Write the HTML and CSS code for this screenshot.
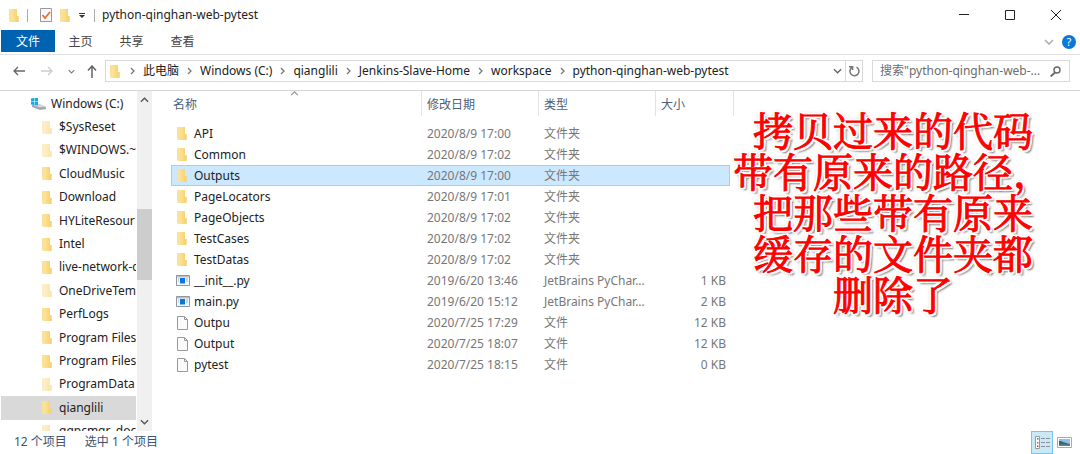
FILE: index.html
```html
<!DOCTYPE html>
<html lang="zh-CN">
<head>
<meta charset="utf-8">
<title>python-qinghan-web-pytest</title>
<link rel="stylesheet" href="styles.css">
</head>
<body>
<svg width="0" height="0" class="defs" aria-hidden="true">
  <defs>
    <linearGradient id="gold" x1="0" x2="1"><stop offset="0" stop-color="#ffe9a6"/><stop offset="1" stop-color="#f6cf6b"/></linearGradient>
    <symbol id="folder" viewBox="0 0 10 13"><path d="M0 0h8v7h1.500v6H2L0 12z" fill="url(#gold)"/><path d="M0 0l2 1v12l-2-1z" fill="#fbe09a"/><path d="M8 7h1.500v6H8z" fill="#f6d27a"/></symbol>
    <symbol id="chev" viewBox="0 0 6 8"><path d="M1 1l3 3-3 3" fill="none" stroke="#777" stroke-width="1.3"/></symbol>
    <symbol id="down" viewBox="0 0 10 6"><path d="M1 1l4 4 4-4" fill="none" stroke="currentColor" stroke-width="1.5"/></symbol>
    <symbol id="py" viewBox="0 0 14 11"><path d="M.5.5h13v10H.5z" fill="#f4f7fa" stroke="#8e979f"/><path d="M1 1h12v1.500H1z" fill="#b9c1c8"/><path d="M4 3h5v5.500H4z" fill="#0a78d7"/><path d="M10 4h2M10 6h2M2 4h1M2 6h1" stroke="#9db4c8"/></symbol>
    <symbol id="doc" viewBox="0 0 11 14"><path d="M.5.500h7l3 3v10H.5z" fill="#fafafa" stroke="#999"/><path d="M7.500.500v3h3" fill="none" stroke="#999"/></symbol>
  </defs>
</svg>
<div class="window">
  <header class="titlebar">
    <svg class="folder"><use href="#folder"/></svg>
    <span class="rule"></span>
    <button class="plain check" aria-label="属性"><svg width="12" height="14" viewBox="0 0 12 14"><path d="M.5.500h11v13H.5z" fill="#f8f8f8" stroke="#999"/><path d="M2.500 7l2.500 3 5-6" fill="none" stroke="#e8703a" stroke-width="1.800"/></svg></button>
    <button class="plain" aria-label="新建文件夹"><svg class="folder"><use href="#folder"/></svg></button>
    <button class="plain more" aria-label="自定义快速访问工具栏"><svg width="6" height="5" viewBox="0 0 6 5"><path d="M0 0h6v1H0zM0 2h6L3 5z" fill="#333"/></svg></button>
    <span class="rule"></span>
    <h1 class="title">python-qinghan-web-pytest</h1>
    <div class="controls">
      <button class="plain" aria-label="最小化"><svg width="10" height="10" viewBox="0 0 10 10"><path d="M0 4.500h10" stroke="#222"/></svg></button>
      <button class="plain" aria-label="最大化"><svg width="10" height="10" viewBox="0 0 10 10"><path d="M.5.500h9v9h-9z" fill="none" stroke="#222"/></svg></button>
      <button class="plain" aria-label="关闭"><svg width="10" height="10" viewBox="0 0 10 10"><path d="M0 0l10 10M10 0L0 10" stroke="#222"/></svg></button>
    </div>
  </header>
  <div class="ribbon">
    <button class="tab active">文件</button><button class="tab">主页</button><button class="tab">共享</button><button class="tab">查看</button>
    <div class="ribbon-end">
      <button class="plain light" aria-label="展开功能区"><svg width="10" height="6"><use href="#down"/></svg></button>
      <button class="plain help" aria-label="帮助">?</button>
    </div>
  </div>
  <div class="location">
    <div class="history">
      <button class="plain" aria-label="后退"><svg width="12" height="10" viewBox="0 0 12 10"><path d="M12 5H1M5 1L1 5l4 4" fill="none" stroke="#666" stroke-width="1.300"/></svg></button>
      <button class="plain" aria-label="前进"><svg width="12" height="10" viewBox="0 0 12 10"><path d="M0 5h11M7 1l4 4-4 4" fill="none" stroke="#ccc" stroke-width="1.300"/></svg></button>
      <button class="plain recent" aria-label="最近位置"><svg width="7" height="5"><use href="#down"/></svg></button>
      <button class="plain" aria-label="向上"><svg width="10" height="13" viewBox="0 0 10 13"><path d="M5 13V1M1 5.500L5 1l4 4.500" fill="none" stroke="#666" stroke-width="1.500"/></svg></button>
    </div>
    <nav class="address" aria-label="地址">
      <svg class="folder"><use href="#folder"/></svg>
      <svg class="chev"><use href="#chev"/></svg><a href="#">此电脑</a>
      <svg class="chev"><use href="#chev"/></svg><a href="#">Windows (C:)</a>
      <svg class="chev"><use href="#chev"/></svg><a href="#">qianglili</a>
      <svg class="chev"><use href="#chev"/></svg><a href="#">Jenkins-Slave-Home</a>
      <svg class="chev"><use href="#chev"/></svg><a href="#">workspace</a>
      <svg class="chev"><use href="#chev"/></svg><a href="#">python-qinghan-web-pytest</a>
      <button class="plain drop" aria-label="以前的位置"><svg width="9" height="6"><use href="#down"/></svg></button>
      <button class="plain refresh" aria-label="刷新"><svg width="11" height="12" viewBox="0 0 11 12"><path d="M7.500 2.200A4.500 4.500 0 1 1 3 2.400M0 1.700h3.600V5" fill="none" stroke="#777" stroke-width="1.500"/></svg></button>
    </nav>
    <div class="search">
      <input type="text" aria-label="搜索" placeholder='搜索"python-qinghan-web-...'>
      <svg width="11" height="11" viewBox="0 0 11 11"><circle cx="7" cy="4" r="3" fill="none" stroke="#666" stroke-width="1.400"/><path d="M5 6.500L.7 10.500" stroke="#666" stroke-width="1.800"/></svg>
    </div>
  </div>
  <main class="body">
    <nav class="tree" aria-label="文件夹">
      <ul>
        <li class="drive"><svg width="15" height="12" viewBox="0 0 15 12"><path d="M1 7l7-1 7 3v2l-6 1-8-3z" fill="#a3a8ab"/><path d="M2 7l6-1 6 2.500-5 1z" fill="#d5d8da"/><path d="M0 .500L3 0V3H0zM3.500 0H7v3H3.500zM0 3.500h3v3.500L0 6.500zM3.500 3.500H7v4l-3.500-.5z" fill="#18a8e8"/></svg>Windows (C:)</li>
        <li class="faded"><svg class="folder"><use href="#folder"/></svg>$SysReset</li>
        <li class="faded"><svg class="folder"><use href="#folder"/></svg>$WINDOWS.~</li>
        <li><svg class="folder"><use href="#folder"/></svg>CloudMusic</li>
        <li><svg class="folder"><use href="#folder"/></svg>Download</li>
        <li><svg class="folder"><use href="#folder"/></svg>HYLiteResour</li>
        <li><svg class="folder"><use href="#folder"/></svg>Intel</li>
        <li><svg class="folder"><use href="#folder"/></svg>live-network-c</li>
        <li class="faded"><svg class="folder"><use href="#folder"/></svg>OneDriveTem</li>
        <li><svg class="folder"><use href="#folder"/></svg>PerfLogs</li>
        <li><svg class="folder"><use href="#folder"/></svg>Program Files</li>
        <li><svg class="folder"><use href="#folder"/></svg>Program Files</li>
        <li class="faded"><svg class="folder"><use href="#folder"/></svg>ProgramData</li>
        <li class="current"><svg class="folder"><use href="#folder"/></svg>qianglili</li>
        <li class="faded"><svg class="folder"><use href="#folder"/></svg>qqpcmgr_doc</li>
      </ul>
    </nav>
    <div class="scrollbar">
      <svg class="up" width="9" height="6"><use href="#down"/></svg>
      <div class="track"><div class="thumb"></div></div>
      <svg width="9" height="6"><use href="#down"/></svg>
    </div>
    <section class="content">
      <table class="files">
        <colgroup><col><col class="c-date"><col class="c-type"><col class="c-size"></colgroup>
        <thead><tr><th class="sorted">名称<svg class="sort up" width="9" height="5"><use href="#down"/></svg></th><th>修改日期</th><th>类型</th><th>大小</th></tr></thead>
        <tbody>
          <tr><td><svg class="folder"><use href="#folder"/></svg>API</td><td>2020/8/9 17:00</td><td>文件夹</td><td></td></tr>
          <tr><td><svg class="folder"><use href="#folder"/></svg>Common</td><td>2020/8/9 17:02</td><td>文件夹</td><td></td></tr>
          <tr class="selected"><td><svg class="folder"><use href="#folder"/></svg>Outputs</td><td>2020/8/9 17:00</td><td>文件夹</td><td></td></tr>
          <tr><td><svg class="folder"><use href="#folder"/></svg>PageLocators</td><td>2020/8/9 17:01</td><td>文件夹</td><td></td></tr>
          <tr><td><svg class="folder"><use href="#folder"/></svg>PageObjects</td><td>2020/8/9 17:02</td><td>文件夹</td><td></td></tr>
          <tr><td><svg class="folder"><use href="#folder"/></svg>TestCases</td><td>2020/8/9 17:02</td><td>文件夹</td><td></td></tr>
          <tr><td><svg class="folder"><use href="#folder"/></svg>TestDatas</td><td>2020/8/9 17:02</td><td>文件夹</td><td></td></tr>
          <tr><td><svg class="py"><use href="#py"/></svg>__init__.py</td><td>2019/6/20 13:46</td><td>JetBrains PyChar...</td><td>1 KB</td></tr>
          <tr><td><svg class="py"><use href="#py"/></svg>main.py</td><td>2019/6/20 15:12</td><td>JetBrains PyChar...</td><td>2 KB</td></tr>
          <tr><td><svg class="doc"><use href="#doc"/></svg>Outpu</td><td>2020/7/25 17:29</td><td>文件</td><td>12 KB</td></tr>
          <tr><td><svg class="doc"><use href="#doc"/></svg>Output</td><td>2020/7/25 18:07</td><td>文件</td><td>12 KB</td></tr>
          <tr><td><svg class="doc"><use href="#doc"/></svg>pytest</td><td>2020/7/25 18:15</td><td>文件</td><td>0 KB</td></tr>
        </tbody>
      </table>
      <p class="note">拷贝过来的代码<br>带有原来的路径，<br>把那些带有原来<br>缓存的文件夹都<br>删除了</p>
    </section>
  </main>
  <footer class="status">
    <span>12 个项目</span><span>选中 1 个项目</span>
    <div class="views">
      <button class="plain view on" aria-label="详细信息"><svg width="15" height="13" viewBox="0 0 15 13"><path d="M.5.500h4v12h-4z" fill="#fff" stroke="#999"/><path d="M2 2h1.500v1.500H2z" fill="#3a7ab5"/><path d="M2 6h1.500v1.500H2z" fill="#a67434"/><path d="M2 9.500h1.500V11H2z" fill="#d33"/><path d="M6 2.500h4M11 2.500h4M6 6.500h4M11 6.500h4M6 10.500h4M11 10.500h4" stroke="#8a9399"/></svg></button>
      <button class="plain view" aria-label="大缩略图"><svg width="15" height="11" viewBox="0 0 15 11"><path d="M.5.500h14v10H.5z" fill="#fff" stroke="#aaa"/><path d="M2 2h11v7H2z" fill="#8bc0f0"/><path d="M2 4c4 0 5 2 11 3v1H2z" fill="#3c6b55"/><path d="M2 7.500h11V9H2z" fill="#4d83b5"/></svg></button>
    </div>
  </footer>
</div>
</body>
</html>
```
FILE: styles.css
```css
* { box-sizing: border-box; }
body {
  margin: 0;
  background: #fff;
  color: #222;
  font: 12px/20px "Noto Sans", "Noto Sans CJK SC", sans-serif;
}
.defs { position: absolute; }
svg { flex: none; }
a { color: inherit; text-decoration: none; }
button { font: inherit; color: inherit; }
.plain {
  display: flex;
  align-items: center;
  justify-content: center;
  padding: 0;
  border: 0;
  background: none;
}
.folder { width: 10px; height: 13px; }
.window { display: flex; flex-direction: column; min-height: 100vh; }

.titlebar { display: flex; align-items: center; height: 30px; padding-left: 9px; }
.rule { width: 1px; height: 13px; margin-left: 8px; background: #aaa; }
.check { margin: 0 8px 0 12px; }
.more { width: 24px; }
.titlebar .more + .rule { margin-left: 0; }
.title { margin: 0 0 0 7px; font-size: 12px; font-weight: 400; }
.controls { display: flex; margin-left: auto; padding-right: 1px; }
.controls button { width: 46px; height: 30px; }

.ribbon { display: flex; height: 25px; padding-left: 1px; border-bottom: 1px solid #e2e2e2; }
.tab {
  width: 51px;
  height: 22px;
  padding: 1px 0 0;
  border: 0;
  background: none;
  color: #444;
}
.tab.active { width: 54px; background: #0063b1; color: #fff; }
.ribbon-end { display: flex; align-items: center; gap: 8px; margin-left: auto; padding-right: 4px; }
.light { color: #aaa; }
.help {
  width: 14px;
  height: 14px;
  border-radius: 50%;
  background: #0a78d7;
  color: #fff;
  font-size: 11px;
  line-height: 14px;
}

.location {
  display: flex;
  align-items: center;
  height: 36px;
  padding: 0 10px 3px 0;
  border-bottom: 1px solid #d6d6d6;
}
.history { display: flex; align-items: center; width: 105px; padding-left: 13px; gap: 16px; }
.recent { margin: 0 -4px 0 -1px; color: #777; }
.address {
  display: flex;
  flex: 1;
  align-items: center;
  height: 22px;
  padding-left: 4px;
  border: 1px solid #d9d9d9;
  white-space: nowrap;
}
.chev { width: 6px; height: 8px; margin: 0 7px 0 8px; }
.folder + .chev { margin-left: 10px; }
.drop { width: 16px; margin-left: auto; color: #666; }
.refresh { width: 17px; height: 20px; border-left: 1px solid #d9d9d9; }
.search {
  display: flex;
  align-items: center;
  width: 198px;
  height: 22px;
  margin-left: 9px;
  padding: 0 8px 0 7px;
  border: 1px solid #d9d9d9;
}
.search input {
  flex: 1;
  min-width: 0;
  height: 20px;
  padding: 0;
  border: 0;
  outline: 0;
  background: none;
  font: inherit;
}
.search input::placeholder { color: #6d6d6d; opacity: 1; }

.body { display: flex; flex: 1; }
.tree { width: 137px; height: 340px; padding: 1px 1px 0; overflow: hidden; }
.tree ul {
  display: grid;
  grid-auto-rows: 1fr;
  height: 351px;
  margin: 0;
  padding: 0;
  list-style: none;
}
.tree li { display: flex; align-items: center; gap: 7px; padding-left: 41px; white-space: nowrap; overflow: hidden; }
.tree .drive { gap: 5px; padding-left: 30px; }
.faded .folder { opacity: .55; }
.tree .current { background: #d9d9d9; }
.scrollbar {
  display: flex;
  flex-direction: column;
  align-items: center;
  width: 15px;
  height: 340px;
  padding: 6px 0;
  background: #f0f0f0;
  color: #555;
}
.up { transform: rotate(180deg); }
.track { flex: 1; width: 100%; padding-top: 106px; }
.thumb { height: 71px; background: #cdcdcd; }

.content { position: relative; flex: 1; padding-left: 19px; }
.files { width: 559px; table-layout: fixed; border-spacing: 0; white-space: nowrap; }
.c-date, .c-type { width: 117px; }
.c-size { width: 74px; }
.files th {
  height: 25px;
  padding: 2px 5px 0;
  border-right: 1px solid #e3e3e3;
  color: #4c607a;
  font-weight: 400;
  text-align: left;
}
.files th:first-child { padding-left: 2px; }
.files th:last-child { border-right: 0; box-shadow: 3px 0 #fff, 4px 0 #e3e3e3; }
.sorted { position: relative; }
.sort { position: absolute; top: 0; left: 119px; color: #999; }
.files tbody::before { content: ""; display: block; height: 7px; }
.files td { height: 21px; padding: 0 5px; color: #777; }
.files td:first-child { display: flex; align-items: center; padding-left: 6px; color: #222; }
.files td:last-child { padding-right: 4px; text-align: right; }
.files .folder { margin-right: 7px; }
.files .py { width: 14px; height: 11px; margin: 0 4px 0 -1px; }
.files .doc { width: 11px; height: 14px; margin-right: 6px; }
.selected { background: #cce8ff; outline: 1px solid #99d1ff; outline-offset: -1px; }
.note {
  position: absolute;
  top: 17px;
  left: 581px;
  margin: 0;
  color: #f00;
  font: 400 40px/41px "Noto Serif CJK SC", "Noto Sans CJK SC", serif;
  text-align: center;
  white-space: nowrap;
  -webkit-text-stroke: 1px #f00;
  text-shadow:
    2px 0 #fff, -2px 0 #fff, 0 2px #fff, 0 -2px #fff,
    2px 2px #fff, -2px 2px #fff, 2px -2px #fff, -2px -2px #fff,
    3px 3px 2px #777, 0 0 4px #888;
}

.status { display: flex; height: 23px; padding-left: 14px; gap: 18px; color: #3c5270; }
.status span { padding-top: 1px; }
.views { display: flex; margin-left: auto; padding-right: 5px; }
.view { width: 22px; height: 23px; }
.view.on { border: 1px solid #7cc5e8; background: #cbe8f6; }
```
